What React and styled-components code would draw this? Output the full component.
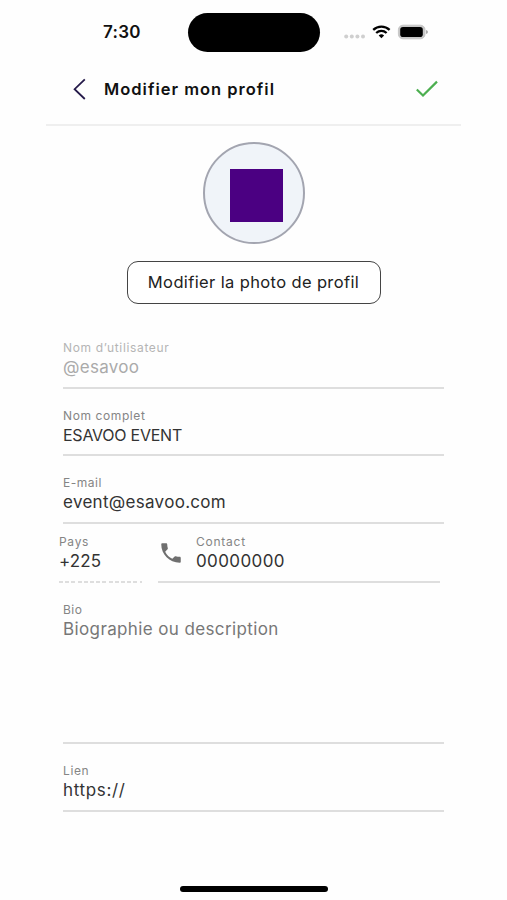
import React from 'react';
import styled, { createGlobalStyle } from 'styled-components';

const GlobalStyle = createGlobalStyle`
  * { box-sizing: border-box; }
  body {
    margin: 0;
    background: #fefefe;
    font-family: Inter, "Liberation Sans", sans-serif;
  }
`;

const Screen = styled.div`
  width: 415px;
  height: 900px;
  margin-left: 46px;
  display: flex;
  flex-direction: column;
`;

const StatusBar = styled.div`
  height: 64px;
  display: flex;
  align-items: center;
  flex-shrink: 0;
`;

const Time = styled.div`
  width: 85px;
  margin-left: 57px;
  font-size: 17px;
  font-weight: 600;
  line-height: 20px;
  letter-spacing: ${({ $spacing }) => $spacing}px;
  color: #111;
`;

const Island = styled.div`
  width: 132px;
  height: 39px;
  border-radius: 20px;
  background: #000;
`;

const StatusIcons = styled.div`
  display: flex;
  align-items: center;
  margin-left: 24px;
`;

const Header = styled.div`
  height: 62px;
  flex-shrink: 0;
  display: flex;
  align-items: center;
  padding: 0 22px 10px 26px;
  border-bottom: 2px solid #efefef;
`;

const Title = styled.h1`
  flex: 1;
  margin: 0 0 0 16px;
  font-size: 16.5px;
  font-weight: 600;
  line-height: 20px;
  letter-spacing: ${({ $spacing }) => $spacing}px;
  white-space: nowrap;
  color: #111;
`;

const Profile = styled.div`
  display: flex;
  flex-direction: column;
  align-items: center;
  padding-top: 16px;
`;

const Avatar = styled.div`
  width: 102px;
  height: 102px;
  border: 2px solid #a3a5b0;
  border-radius: 50%;
  background: #f0f4f9;
  display: flex;
  align-items: center;
  justify-content: center;
  padding: 4px 0 0 5px;
`;

const Logo = styled.div`
  width: 53px;
  height: 53px;
  background: #4b0082;
`;

const PhotoButton = styled.button`
  width: 254px;
  height: 43px;
  margin-top: 17px;
  padding: 0 0 1px;
  border: 1.5px solid #444;
  border-radius: 11px;
  background: #fff;
  font-family: inherit;
  font-size: 16.5px;
  letter-spacing: ${({ $spacing }) => $spacing}px;
  white-space: nowrap;
  color: #222;
`;

const Form = styled.div`
  display: flex;
  flex-direction: column;
  padding: 33px 17px 0 17px;
`;

const FieldBox = styled.div`
  height: ${({ $height }) => $height}px;
  padding-top: ${({ $top }) => $top}px;
  border-bottom: ${({ $dashed }) => ($dashed ? 'none' : '2px solid #dedede')};
  background: ${({ $dashed }) =>
    $dashed
      ? 'repeating-linear-gradient(90deg, #dedede 0 4px, transparent 4px 6.2px) 0 100% / 100% 2px no-repeat'
      : 'none'};
  width: ${({ $width }) => $width || 'auto'};
  display: flex;
  flex: ${({ $grow }) => ($grow ? 1 : 'none')};
`;

const Label = styled.div`
  font-size: 12px;
  line-height: 16px;
  letter-spacing: ${({ $spacing }) => $spacing}px;
  white-space: nowrap;
  color: ${({ $disabled }) => ($disabled ? '#b5b5b5' : '#858585')};
`;

const Value = styled.div`
  font-size: ${({ $size }) => $size}px;
  line-height: 22px;
  letter-spacing: ${({ $spacing }) => $spacing}px;
  white-space: nowrap;
  color: ${({ $tone }) => $tone || '#333'};
`;

const PhoneRow = styled.div`
  display: flex;
  gap: 16px;
  margin: 0 4px 0 -4px;
`;

const PhoneIcon = styled.svg`
  width: 26px;
  height: 26px;
  margin: 6px 12px 0 0;
  fill: #6f6f6f;
`;

const HomeBar = styled.div`
  width: 148px;
  height: 6px;
  margin: auto 0 8px 134px;
  border-radius: 3px;
  background: #000;
  flex-shrink: 0;
`;

const Field = ({ label, value, labelSpacing, valueSpacing, height = 68, top = 19, size = 17, tone, disabled, dashed, width, grow, icon }) => (
  <FieldBox $height={height} $top={top} $dashed={dashed} $width={width} $grow={grow}>
    {icon}
    <div>
      <Label $spacing={labelSpacing} $disabled={disabled}>{label}</Label>
      <Value $spacing={valueSpacing} $size={size} $tone={tone}>{value}</Value>
    </div>
  </FieldBox>
);

const Phone = () => (
  <PhoneIcon viewBox="0 0 24 24">
    <path d="M6.62 10.79c1.44 2.83 3.76 5.14 6.59 6.59l2.2-2.2c.27-.27.67-.36 1.02-.24 1.12.37 2.33.57 3.57.57.55 0 1 .45 1 1V20c0 .55-.45 1-1 1-9.39 0-17-7.61-17-17 0-.55.45-1 1-1h3.5c.55 0 1 .45 1 1 0 1.25.2 2.45.57 3.57.11.35.03.74-.25 1.02l-2.2 2.2z" />
  </PhoneIcon>
);

const App = () => (
  <>
    <GlobalStyle />
    <Screen>
      <StatusBar>
        <Time $spacing={0.3}>7:30</Time>
        <Island />
        <StatusIcons>
          <svg width="86" height="20" viewBox="0 0 86 20">
            <g fill="#cfcfcf">
              <circle cx="2.2" cy="14.5" r="2" />
              <circle cx="7.8" cy="14.5" r="2" />
              <circle cx="13.4" cy="14.5" r="2" />
              <circle cx="19" cy="14.5" r="2" />
            </g>
            <g fill="none" stroke="#000" strokeWidth="2.3">
              <path d="M29.2 7.8a12 12 0 0 1 16.4 0" />
              <path d="M32.2 11a7.6 7.6 0 0 1 10.4 0" />
            </g>
            <path d="M34.7 13.4a4 4 0 0 1 5.4 0l-2.7 2.8z" />
            <rect x="54.4" y="3.2" width="26.6" height="13.6" rx="4.6" fill="#c6c6c6" stroke="#c6c6c6" />
            <rect x="56.2" y="4.9" width="22.6" height="10.2" rx="2.8" />
            <path d="M82.2 8v4q1.6-.7 1.6-2t-1.6-2z" fill="#999" />
          </svg>
        </StatusIcons>
      </StatusBar>

      <Header>
        <svg width="16" height="24" viewBox="0 0 16 24" fill="none" stroke="#251a4a" strokeWidth="1.8">
          <path d="M12.8 2.4 2.6 12.2l10.2 9.8" />
        </svg>
        <Title $spacing={1}>Modifier mon profil</Title>
        <svg width="24" height="20" viewBox="0 0 24 20" fill="none" stroke="#4caf50" strokeWidth="2.2">
          <path d="M1.8 10.5l6.2 6L22 2.6" />
        </svg>
      </Header>

      <Profile>
        <Avatar>
          <Logo />
        </Avatar>
        <PhotoButton $spacing={0.37}>Modifier la photo de profil</PhotoButton>
      </Profile>

      <Form>
        <Field label="Nom d’utilisateur" value="@esavoo" labelSpacing={0.65} valueSpacing={0.3} height={52} top={3} tone="#aaa" disabled />
        <Field label="Nom complet" value="ESAVOO EVENT" labelSpacing={0.6} valueSpacing={-0.25} height={67} size={16} />
        <Field label="E-mail" value="event@esavoo.com" labelSpacing={0.5} valueSpacing={0.3} height={68} />
        <PhoneRow>
          <Field label="Pays" value="+225" labelSpacing={0.7} valueSpacing={0.1} height={59} top={10} width="83px" dashed />
          <Field label="Contact" value="00000000" labelSpacing={0.75} valueSpacing={0.4} height={59} top={10} icon={<Phone />} grow />
        </PhoneRow>
        <Field label="Bio" value="Biographie ou description" labelSpacing={0.5} valueSpacing={0.38} height={161} tone="#777" />
        <Field label="Lien" value="https://" labelSpacing={0.6} valueSpacing={0.65} height={68} />
      </Form>

      <HomeBar />
    </Screen>
  </>
);

export default App;
